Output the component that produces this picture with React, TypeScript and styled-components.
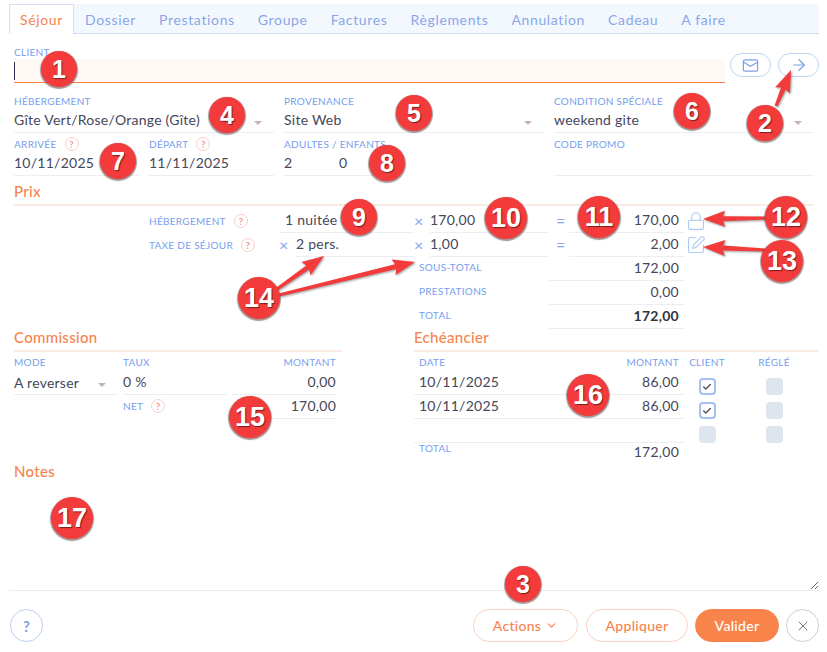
import React from "react";
import styled, { createGlobalStyle } from "styled-components";
import { ArrowRight, ChevronDown, Check, Lock, Mail, SquarePen, X } from "lucide-react";

const FONT = `"Lato", "Noto Sans", "Liberation Sans", sans-serif`;
const BLUE = "#769eee";
const ORANGE = "#f8844c";
const TEXT = "#45475a";
const LINE = "#eceef2";

const Global = createGlobalStyle`
  html, body { margin: 0; padding: 0; background: #fff; }
  body { font-family: ${FONT}; color: ${TEXT}; font-size: 14px; }
  * { box-sizing: border-box; }
`;

const Page = styled.div`
  position: relative;
  width: 827px;
  height: 652px;
  padding: 4px 8px 0 9px;
  display: flex;
  flex-direction: column;
  overflow: hidden;
`;

const TabBar = styled.div`
  display: flex;
  height: 30px;
  background: #f3f8ff;
  border-bottom: 1px solid #cfdcf6;
`;
const Tab = styled.div<{ $active?: boolean }>`
  height: 30px;
  padding: 0 11px;
  line-height: 29px;
  font-size: 14px;
  letter-spacing: 0.65px;
  color: ${(p) => (p.$active ? ORANGE : "#8aa6e9")};
  background: ${(p) => (p.$active ? "#fff" : "transparent")};
  border: 1px solid ${(p) => (p.$active ? "#d8dcf6" : "transparent")};
  border-bottom: 0;
  margin: 0 -0.5px;
  &:first-child { margin-left: 0; padding: 0 10px; }
`;

const Main = styled.div`
  flex: 1;
  min-height: 0;
  padding-left: 5px;
  display: flex;
  flex-direction: column;
`;

const ClientRow = styled.div`
  display: flex;
  margin-top: 7px;
`;
const ClientField = styled.div`
  width: 711px;
`;
const Label = styled.div<{ $right?: boolean }>`
  height: 18px;
  padding-top: 4px;
  font-size: 10px;
  line-height: 12px;
  letter-spacing: 0.3px;
  color: ${BLUE};
  text-transform: uppercase;
  white-space: nowrap;
  text-align: ${(p) => (p.$right ? "right" : "left")};
  display: flex;
  align-items: center;
  justify-content: ${(p) => (p.$right ? "flex-end" : "flex-start")};
`;
const ClientInput = styled.div`
  height: 24px;
  background: #fff9f6;
  border-bottom: 1px solid ${ORANGE};
  padding-top: 3px;
`;
const TextCaret = styled.div`
  width: 1px;
  height: 18px;
  background: #2a2f52;
`;
const IconButtons = styled.div`
  display: flex;
  gap: 7px;
  margin: 12px 0 0 5px;
`;
const PillIcon = styled.div`
  width: 41px;
  height: 24px;
  border: 1px solid #c0d3f8;
  border-radius: 12px;
  color: #7c9fe6;
  display: flex;
  align-items: center;
  justify-content: center;
`;

const Value = styled.div<{ $right?: boolean; $bold?: boolean }>`
  height: 24px;
  line-height: 22px;
  font-size: 14px;
  letter-spacing: 0.25px;
  white-space: nowrap;
  border-bottom: 1px solid ${LINE};
  text-align: ${(p) => (p.$right ? "right" : "left")};
  padding-right: ${(p) => (p.$right ? "5px" : "0")};
  font-weight: ${(p) => (p.$bold ? 700 : 400)};
  color: ${(p) => (p.$bold ? "#33343f" : TEXT)};
`;
const ThreeCols = styled.div<{ $gapTop?: number }>`
  display: grid;
  grid-template-columns: repeat(3, 260px);
  column-gap: 10px;
  margin-top: ${(p) => p.$gapTop ?? 0}px;
  ${Value} {
    height: 25px;
    line-height: 24px;
  }
`;
const SelectValue = styled(Value)`
  display: flex;
  align-items: center;
  justify-content: space-between;
  padding-right: 12px;
`;
const CaretDown = styled.span`
  width: 0;
  height: 0;
  margin-top: 5px;
  border-left: 4px solid transparent;
  border-right: 4px solid transparent;
  border-top: 4px solid #c5b2ab;
`;
const DatePair = styled.div`
  display: grid;
  grid-template-columns: 125px 125px;
  column-gap: 10px;
`;
const PersonPair = styled.div`
  width: 110px;
`;
const PersonValues = styled(Value)`
  display: flex;
  & > span { width: 55px; }
`;
const Help = styled.span<{ $gap?: number }>`
  display: inline-flex;
  align-items: center;
  justify-content: center;
  width: 14px;
  height: 14px;
  margin-left: ${(p) => p.$gap ?? 8}px;
  border: 1px solid #fbcfc9;
  border-radius: 50%;
  color: #f39a90;
  font-size: 10px;
  font-weight: 700;
  line-height: 1;
  flex: none;
`;

const SectionTitle = styled.div<{ $plain?: boolean }>`
  height: ${(p) => (p.$plain ? "18px" : "23px")};
  line-height: 17px;
  font-size: 15px;
  font-weight: 500;
  letter-spacing: 0.3px;
  color: ${ORANGE};
  border-bottom: ${(p) => (p.$plain ? "0" : "2px solid #fcebe2")};
`;
const PrixTitle = styled(SectionTitle)`
  width: 800px;
  margin-top: 6px;
  height: 24px;
  line-height: 18px;
`;

const PriceRows = styled.div`
  margin-top: 3px;
`;
const LineRow = styled.div`
  display: grid;
  grid-template-columns: 135px 130px 135px 16px 119px 20px 115px 24px;
  height: 24px;
`;
const RowLabel = styled(Label)`
  grid-column: 2;
  height: 24px;
  padding-top: 0;
  padding-bottom: 1px;
`;
const Qty = styled(Value)<{ $sign?: boolean }>`
  grid-column: 3;
  margin-left: ${(p) => (p.$sign ? "16px" : "0")};
  padding-left: ${(p) => (p.$sign ? "1px" : "6px")};
  position: relative;
`;
const Sign = styled.span`
  color: #86a6ec;
  font-size: 16px;
  line-height: 24px;
`;
const QtySign = styled(Sign)`
  position: absolute;
  left: -16px;
  top: 0;
`;
const EqSign = styled(Sign)`
  padding-left: 7px;
`;
const RowIcon = styled.div`
  padding: 2px 0 0 2px;
  color: #aec6f6;
`;
const SummaryRow = styled.div`
  display: grid;
  grid-template-columns: 400px 135px 135px;
  height: 24px;
`;
const SummaryLabel = styled(Label)`
  grid-column: 2;
  padding: 0 0 2px 5px;
  height: 22px;
`;
const SummaryValue = styled(Value)`
  grid-column: 3;
`;

const Columns = styled.div`
  display: grid;
  grid-template-columns: 328px 405px;
  column-gap: 72px;
`;
const ColumnTop = styled.div`
  height: 134px;
`;
const CommissionGrid = styled.div`
  display: grid;
  grid-template-columns: 104px 104px 105px;
  column-gap: 5px;
`;
const HeadLabel = styled(Label)`
  height: 19px;
  padding: 0 ${(p) => (p.$right ? "1px" : "0")} 0 0;
`;
const NetLabel = styled(Label)`
  height: 24px;
  padding: 0 0 2px;
  grid-column: 2;
`;
const CommissionAmount = styled(Value)`
  text-align: right;
  padding-right: 1px;
`;
const Schedule = styled.div`
  display: flex;
`;
const ScheduleTable = styled.div`
  width: 270px;
  flex: none;
`;
const ScheduleHead = styled.div`
  display: flex;
  justify-content: space-between;
  padding: 0 5px;
`;
const DateValue = styled(Value)`
  display: flex;
  justify-content: space-between;
  padding: 0 5px;
`;
const TotalRow = styled.div`
  display: flex;
  justify-content: space-between;
  padding: 0 5px;
`;
const TotalLabel = styled(Label)`
  height: 12px;
  padding: 0;
  margin-top: -1px;
`;
const TotalValue = styled.div`
  font-size: 14px;
  letter-spacing: 0.25px;
  line-height: 18px;
`;
const Checks = styled.div`
  display: flex;
  gap: 21px;
`;
const CheckCol = styled.div`
  width: 46px;
  display: flex;
  flex-direction: column;
  align-items: center;
`;
const CheckCell = styled.div`
  height: 24px;
  padding-top: 7px;
`;
const Box = styled.div<{ $on?: boolean }>`
  width: 17px;
  height: 17px;
  border-radius: 4px;
  background: ${(p) => (p.$on ? "#fff" : "#dfe5ee")};
  border: ${(p) => (p.$on ? "2px solid #a6bff1" : "0")};
  color: #555;
  display: flex;
  align-items: center;
  justify-content: center;
`;

const NotesArea = styled.textarea`
  display: block;
  flex: 1;
  width: 100%;
  min-height: 0;
  border: 0;
  outline: 0;
  resize: vertical;
  background: transparent;
`;

const Footer = styled.div`
  border-top: 1px solid ${LINE};
  height: 62px;
  flex: none;
  padding: 18px 0 0 1px;
  display: flex;
  justify-content: space-between;
`;
const Round = styled.div<{ $tone?: "blue" | "grey" }>`
  width: 33px;
  height: 33px;
  border-radius: 50%;
  border: 1px solid ${(p) => (p.$tone === "grey" ? "#cfcfcf" : "#bcd0f8")};
  color: ${(p) => (p.$tone === "grey" ? "#777" : "#7c9fe6")};
  display: flex;
  align-items: center;
  justify-content: center;
  font-size: 15px;
  font-weight: 700;
`;
const FooterActions = styled.div`
  display: flex;
  gap: 7px;
`;
const Btn = styled.div<{ $w: number; $solid?: boolean }>`
  width: ${(p) => p.$w}px;
  height: 33px;
  border-radius: 17px;
  border: 1px solid ${(p) => (p.$solid ? ORANGE : "#f9d2bf")};
  background: ${(p) => (p.$solid ? ORANGE : "#fff")};
  color: ${(p) => (p.$solid ? "#fff" : ORANGE)};
  font-size: 14px;
  letter-spacing: 0.3px;
  font-weight: 500;
  display: flex;
  align-items: center;
  justify-content: center;
  gap: 4px;
`;
const ActionsBtn = styled(Btn)`
  margin-right: 1px;
`;

const Overlay = styled.svg`
  position: absolute;
  left: 0;
  top: 0;
  pointer-events: none;
  filter: drop-shadow(1px 1px 1px rgba(0, 0, 0, 0.4));
`;
const Badge = styled.div<{ $x: number; $y: number; $big: boolean }>`
  position: absolute;
  left: ${(p) => p.$x - (p.$big ? 21 : 18)}px;
  top: ${(p) => p.$y - (p.$big ? 21 : 18)}px;
  width: ${(p) => (p.$big ? 42 : 36)}px;
  height: ${(p) => (p.$big ? 42 : 36)}px;
  border-radius: 50%;
  background: #f33b3b;
  box-shadow: 0 1px 1px 1px rgba(90, 60, 60, 0.55);
  color: #fff;
  font-family: "Liberation Sans", Arial, sans-serif;
  font-weight: 700;
  font-size: ${(p) => (p.$big ? 27 : 25)}px;
  text-shadow: 1px 1px 1px rgba(0, 0, 0, 0.5);
  display: flex;
  align-items: center;
  justify-content: center;
  pointer-events: none;
`;

const badges: [number, number, number][] = [
  [1, 59, 69], [2, 765, 123], [3, 523, 584], [4, 227, 115], [5, 414, 113], [6, 692, 111],
  [7, 118, 161], [8, 387, 163], [9, 359, 217], [10, 506, 218], [11, 599, 217], [12, 786, 217],
  [13, 782, 261], [14, 259, 298], [15, 250, 417], [16, 588, 395], [17, 72, 518],
];

function arrowPoints(x1: number, y1: number, x2: number, y2: number, head = 20, wing = 8, tail = 1.5, neck = 2.5) {
  const len = Math.hypot(x2 - x1, y2 - y1);
  const ux = (x2 - x1) / len;
  const uy = (y2 - y1) / len;
  const nx = -uy;
  const ny = ux;
  const bx = x2 - ux * head;
  const by = y2 - uy * head;
  const pts = [
    [x1 + nx * tail, y1 + ny * tail],
    [bx + nx * neck, by + ny * neck],
    [bx + nx * wing - ux * 2, by + ny * wing - uy * 2],
    [x2, y2],
    [bx - nx * wing - ux * 2, by - ny * wing - uy * 2],
    [bx - nx * neck, by - ny * neck],
    [x1 - nx * tail, y1 - ny * tail],
  ];
  return pts.map((p) => p.map((v) => v.toFixed(1)).join(",")).join(" ");
}

const arrows = [
  arrowPoints(776, 106, 791, 70),
  arrowPoints(768, 218, 703, 219),
  arrowPoints(765, 250, 703, 247),
  arrowPoints(277, 289, 324, 256),
  arrowPoints(279, 295, 415, 262),
];

const tabs = ["Séjour", "Dossier", "Prestations", "Groupe", "Factures", "Règlements", "Annulation", "Cadeau", "A faire"];

export default function App() {
  return (
    <>
      <Global />
      <Page>
        <TabBar>
          {tabs.map((t, i) => (
            <Tab key={t} $active={i === 0}>{t}</Tab>
          ))}
        </TabBar>
        <Main>
          <ClientRow>
            <ClientField>
              <Label>Client</Label>
              <ClientInput><TextCaret /></ClientInput>
            </ClientField>
            <IconButtons>
              <PillIcon><Mail size={17} strokeWidth={1.7} /></PillIcon>
              <PillIcon><ArrowRight size={18} strokeWidth={1.6} /></PillIcon>
            </IconButtons>
          </ClientRow>

          <ThreeCols $gapTop={7}>
            <div>
              <Label>Hébergement</Label>
              <SelectValue>Gîte Vert/Rose/Orange (Gîte)<CaretDown /></SelectValue>
            </div>
            <div>
              <Label>Provenance</Label>
              <SelectValue>Site Web<CaretDown /></SelectValue>
            </div>
            <div>
              <Label>Condition spéciale</Label>
              <SelectValue>weekend gite<CaretDown /></SelectValue>
            </div>
          </ThreeCols>
          <ThreeCols>
            <DatePair>
              <div>
                <Label>Arrivée<Help>?</Help></Label>
                <Value>10/11/2025</Value>
              </div>
              <div>
                <Label>Départ<Help>?</Help></Label>
                <Value>11/11/2025</Value>
              </div>
            </DatePair>
            <PersonPair>
              <Label>Adultes / Enfants</Label>
              <PersonValues><span>2</span><span>0</span></PersonValues>
            </PersonPair>
            <div>
              <Label>Code promo</Label>
              <Value />
            </div>
          </ThreeCols>

          <PrixTitle>Prix</PrixTitle>
          <PriceRows>
            <LineRow>
              <RowLabel>Hébergement<Help>?</Help></RowLabel>
              <Qty>1 nuitée</Qty>
              <Sign>×</Sign>
              <Value>170,00</Value>
              <EqSign>=</EqSign>
              <Value $right>170,00</Value>
              <RowIcon><Lock size={20} strokeWidth={1.3} /></RowIcon>
            </LineRow>
            <LineRow>
              <RowLabel>Taxe de séjour<Help>?</Help></RowLabel>
              <Qty $sign><QtySign>×</QtySign>2 pers.</Qty>
              <Sign>×</Sign>
              <Value>1,00</Value>
              <EqSign>=</EqSign>
              <Value $right>2,00</Value>
              <RowIcon><SquarePen size={20} strokeWidth={1.3} /></RowIcon>
            </LineRow>
            <SummaryRow>
              <SummaryLabel>Sous-total</SummaryLabel>
              <SummaryValue $right>172,00</SummaryValue>
            </SummaryRow>
            <SummaryRow>
              <SummaryLabel>Prestations</SummaryLabel>
              <SummaryValue $right>0,00</SummaryValue>
            </SummaryRow>
            <SummaryRow>
              <SummaryLabel>Total</SummaryLabel>
              <SummaryValue $right $bold>172,00</SummaryValue>
            </SummaryRow>
          </PriceRows>

          <Columns>
            <ColumnTop>
              <SectionTitle>Commission</SectionTitle>
              <CommissionGrid>
                <HeadLabel>Mode</HeadLabel>
                <HeadLabel>Taux</HeadLabel>
                <HeadLabel $right>Montant</HeadLabel>
                <SelectValue>A reverser<CaretDown /></SelectValue>
                <Value>0 %</Value>
                <CommissionAmount>0,00</CommissionAmount>
                <NetLabel>Net<Help>?</Help></NetLabel>
                <CommissionAmount>170,00</CommissionAmount>
              </CommissionGrid>
            </ColumnTop>
            <ColumnTop>
              <SectionTitle>Echéancier</SectionTitle>
              <Schedule>
                <ScheduleTable>
                  <ScheduleHead>
                    <HeadLabel>Date</HeadLabel>
                    <HeadLabel>Montant</HeadLabel>
                  </ScheduleHead>
                  <DateValue><span>10/11/2025</span><span>86,00</span></DateValue>
                  <DateValue><span>10/11/2025</span><span>86,00</span></DateValue>
                  <DateValue />
                  <TotalRow>
                    <TotalLabel>Total</TotalLabel>
                    <TotalValue>172,00</TotalValue>
                  </TotalRow>
                </ScheduleTable>
                <Checks>
                  <CheckCol>
                    <HeadLabel>Client</HeadLabel>
                    <CheckCell><Box $on><Check size={10} strokeWidth={3.5} /></Box></CheckCell>
                    <CheckCell><Box $on><Check size={10} strokeWidth={3.5} /></Box></CheckCell>
                    <CheckCell><Box /></CheckCell>
                  </CheckCol>
                  <CheckCol>
                    <HeadLabel>Réglé</HeadLabel>
                    <CheckCell><Box /></CheckCell>
                    <CheckCell><Box /></CheckCell>
                    <CheckCell><Box /></CheckCell>
                  </CheckCol>
                </Checks>
              </Schedule>
            </ColumnTop>
          </Columns>

          <SectionTitle $plain>Notes</SectionTitle>
          <NotesArea />
        </Main>
        <Footer>
          <Round>?</Round>
          <FooterActions>
            <ActionsBtn $w={105}>Actions <ChevronDown size={13} strokeWidth={2} /></ActionsBtn>
            <Btn $w={102}>Appliquer</Btn>
            <Btn $w={84} $solid>Valider</Btn>
            <Round $tone="grey"><X size={16} strokeWidth={1.5} /></Round>
          </FooterActions>
        </Footer>

        <Overlay width={827} height={652} viewBox="0 0 827 652">
          {arrows.map((p) => (
            <polygon key={p} points={p} fill="#f33b3b" />
          ))}
        </Overlay>
        {badges.map(([n, x, y]) => (
          <Badge key={n} $x={x} $y={y} $big={n >= 10}>{n}</Badge>
        ))}
      </Page>
    </>
  );
}
